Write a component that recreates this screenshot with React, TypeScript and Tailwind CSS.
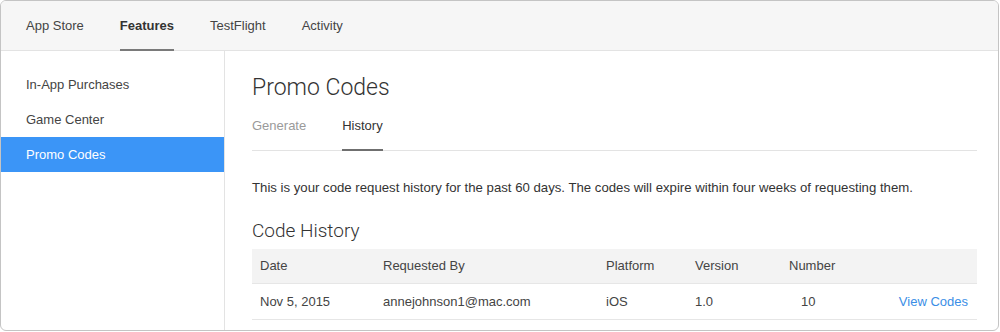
import React from 'react';

const topNav = [
  { name: 'App Store', active: false },
  { name: 'Features', active: true },
  { name: 'TestFlight', active: false },
  { name: 'Activity', active: false },
];

const sideNav = [
  { name: 'In-App Purchases', active: false },
  { name: 'Game Center', active: false },
  { name: 'Promo Codes', active: true },
];

const cols = 'grid grid-cols-[123px_223px_89px_94px_70px_1fr]';

export default function App() {
  return (
    <div
      className="w-[1000px] h-[332px] bg-white text-[#333] overflow-hidden"
      style={{ fontFamily: '"Helvetica Neue", Helvetica, "Liberation Sans", Arial, sans-serif' }}
    >
      <div className="w-[999px] h-[331px] border border-[#c4c4c4] rounded-[6px] overflow-hidden flex flex-col">
        {/* Top bar */}
        <nav className="h-[50px] shrink-0 bg-[#f6f6f6] border-b border-[#e3e3e3] flex items-stretch pl-[25px] gap-9">
          {topNav.map((item) => (
            <div
              key={item.name}
              className={
                item.active
                  ? 'flex items-center text-[13px] font-bold text-[#333] border-b-2 border-[#7a7a7a] -mb-px pt-[2px]'
                  : 'flex items-center text-[13px] text-[#444] pt-[1px]'
              }
            >
              {item.name}
            </div>
          ))}
        </nav>

        <div className="flex flex-1">
          {/* Sidebar */}
          <aside className="w-[224px] shrink-0 border-r border-[#e3e3e3] pt-4">
            {sideNav.map((item) => (
              <div
                key={item.name}
                className={
                  item.active
                    ? 'h-[35px] flex items-center pl-[25px] text-[13px] bg-[#3b95f7] text-white'
                    : 'h-[35px] flex items-center pl-[25px] text-[13px] text-[#444]'
                }
              >
                {item.name}
              </div>
            ))}
          </aside>

          {/* Main */}
          <main className="flex-1 pl-[27px] pr-[21px]">
            <h1
              className="mt-[23px] text-[23px] leading-[28px] font-light text-[#333]"
              style={{ fontFamily: 'Roboto, "Liberation Sans", sans-serif' }}
            >
              Promo Codes
            </h1>

            <div className="mt-[14px] flex items-start gap-9 border-b border-[#e3e3e3] h-[35px]">
              <div className="h-full text-[13px] leading-[20px] text-[#9a9a9a]">Generate</div>
              <div className="h-[35px] text-[13px] leading-[20px] text-[#333] border-b-2 border-[#6f6f6f] -mb-px">History</div>
            </div>

            <p className="mt-[28px] text-[13.2px] leading-[18px] text-[#333]">
              This is your code request history for the past 60 days. The codes will expire within four weeks of requesting them.
            </p>

            <h2
              className="mt-[22px] text-[19px] leading-[24px] font-light text-[#333]"
              style={{ fontFamily: 'Roboto, "Liberation Sans", sans-serif' }}
            >
              Code History
            </h2>

            <div className="mt-[6px] text-[13px]">
              <div className={`${cols} h-[35px] items-center bg-[#f3f3f3] border-b border-[#e6e6e6] text-[#444]`}>
                <div className="pl-2">Date</div>
                <div className="pl-2">Requested By</div>
                <div className="pl-2">Platform</div>
                <div className="pl-2">Version</div>
                <div className="pl-2">Number</div>
                <div></div>
              </div>
              <div className={`${cols} h-[36px] items-center border-b border-[#e6e6e6] text-[#444]`}>
                <div className="pl-2">Nov 5, 2015</div>
                <div className="pl-2">annejohnson1@mac.com</div>
                <div className="pl-2">iOS</div>
                <div className="pl-2">1.0</div>
                <div className="pl-[20px]">10</div>
                <div className="text-right pr-[9px] text-[#3a8ee6]">View Codes</div>
              </div>
            </div>
          </main>
        </div>
      </div>
    </div>
  );
}
